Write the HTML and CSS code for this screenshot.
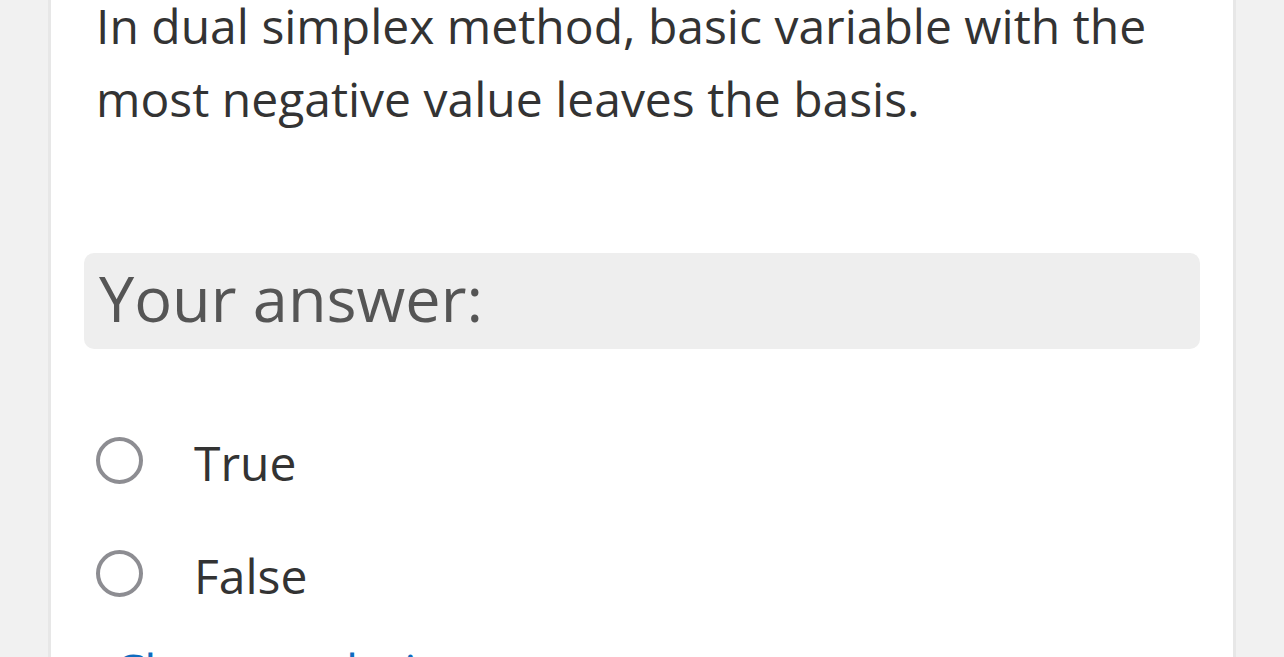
FILE: index.html
```html
<!DOCTYPE html>
<html lang="en">
<head>
<meta charset="utf-8">
<title>Question</title>
<link rel="stylesheet" href="styles.css">
</head>
<body>
<div class="page">
  <main class="card">
    <div class="qtext">In dual simplex method, basic variable with the most negative value leaves the basis.</div>
    <div class="prompt">Your answer:</div>
    <div class="answers">
      <label class="option"><span class="radio"></span><span class="label">True</span></label>
      <label class="option"><span class="radio"></span><span class="label">False</span></label>
    </div>
    <a class="clear" href="#">Clear my choice</a>
  </main>
</div>
</body>
</html>
```

FILE: styles.css
```css
html, body {
  margin: 0;
  padding: 0;
  height: 100%;
  overflow: hidden;
  background: #f1f1f1;
  font-family: "Open Sans", "Noto Sans", sans-serif;
}
.page {
  padding-left: 48px;
  width: 1188px;
}
.card {
  background: #fff;
  border-left: 3px solid #e7e7e7;
  border-right: 3px solid #e7e7e7;
  padding: 0 33px;
  min-height: 800px;
}
.qtext {
  margin-top: -11px;
  padding-left: 12px;
  font-size: 48px;
  line-height: 73px;
  color: #333;
}
.prompt {
  margin-top: 118px;
  background: #eeeeee;
  border-radius: 10px;
  height: 96px;
  box-sizing: border-box;
  padding: 9px 15px 0;
  font-size: 63px;
  line-height: 72px;
  color: #555;
}
.answers {
  margin-top: 57px;
  padding-left: 12px;
  display: flex;
  flex-direction: column;
}
.option {
  display: flex;
  align-items: center;
  height: 113px;
}
.radio {
  width: 47px;
  height: 47px;
  box-sizing: border-box;
  border: 4.5px solid #8d8d92;
  border-radius: 50%;
  flex: none;
  margin-top: -4px;
}
.label {
  margin-left: 51px;
  font-size: 48px;
  line-height: 113px;
  color: #333;
}
.clear {
  display: block;
  margin-top: 10px;
  padding-left: 30px;
  font-size: 48px;
  line-height: 58px;
  color: #0f6cbf;
  text-decoration: none;
}
```
